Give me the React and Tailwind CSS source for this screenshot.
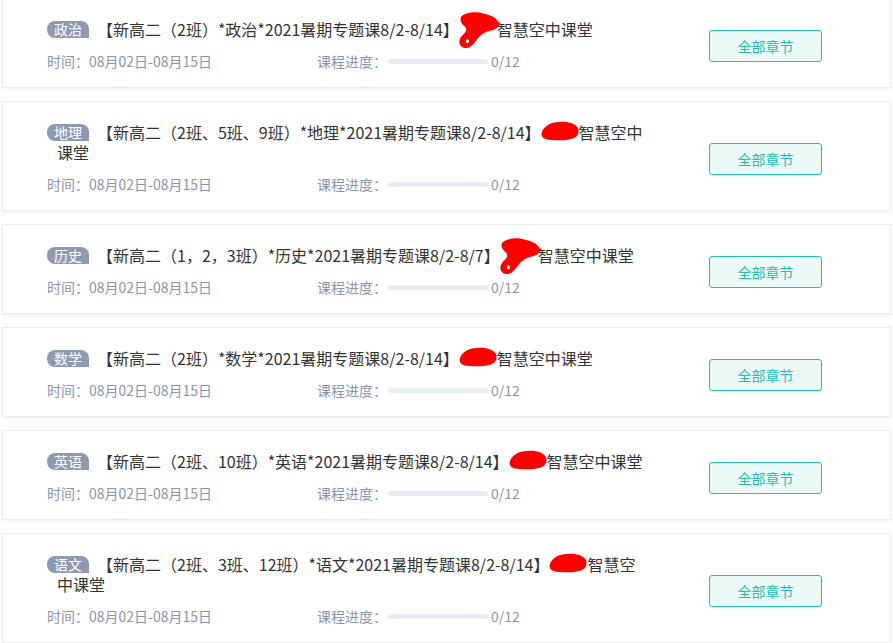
import React from "react";

const blobs = {
  a: (
    <svg width="46" height="40" viewBox="0 0 46 40" className="absolute left-[-4px] top-[-8px]">
      <path d="M6 6 C10 1 22 0 30 3 C36 4 42 7 44 12 C45 16 40 19 34 20 C30 21 27 23 24 26 C20 31 16 38 10 37 C4 36 3 30 6 26 C9 22 12 21 11 17 C9 14 4 12 6 6 Z M12 28 C10 30 11 33 13 32 C15 31 14 28 12 28 Z" fill="#ff0000" fillRule="evenodd" />
    </svg>
  ),
  b: (
    <svg width="42" height="22" viewBox="0 0 42 22" className="absolute left-[-2px] top-[-2px]">
      <path d="M3 12 C5 6 12 2 20 2 C28 1 36 3 39 8 C41 13 38 18 32 19 C26 21 18 20 12 20 C6 20 1 17 3 12 Z" fill="#ff0000" />
    </svg>
  ),
};

const courses = [
  {
    tag: "政治",
    lines: ["【新高二（2班）*政治*2021暑期专题课8/2-8/14】", "智慧空中课堂"],
    blob: "a",
  },
  {
    tag: "地理",
    lines: ["【新高二（2班、5班、9班）*地理*2021暑期专题课8/2-8/14】", "智慧空中"],
    second: "课堂",
    blob: "b",
  },
  {
    tag: "历史",
    lines: ["【新高二（1，2，3班）*历史*2021暑期专题课8/2-8/7】", "智慧空中课堂"],
    blob: "a",
  },
  {
    tag: "数学",
    lines: ["【新高二（2班）*数学*2021暑期专题课8/2-8/14】", "智慧空中课堂"],
    blob: "b",
  },
  {
    tag: "英语",
    lines: ["【新高二（2班、10班）*英语*2021暑期专题课8/2-8/14】", "智慧空中课堂"],
    blob: "b",
  },
  {
    tag: "语文",
    lines: ["【新高二（2班、3班、12班）*语文*2021暑期专题课8/2-8/14】", "智慧空"],
    second: "中课堂",
    blob: "b",
  },
];

function Card({ c, first }) {
  return (
    <div
      className={
        "mx-[2px] flex items-center border border-[#ececec] bg-white pl-[44px] pr-[68px] shadow-[0_2px_3px_rgba(0,0,0,0.05)] " +
        (first ? "-mt-[2px]" : "mt-[13px]")
      }
    >
      <div className="flex-1 pt-[20px] pb-[16px]">
        <div className="flex items-center h-[20px] whitespace-nowrap">
          <span className="inline-flex h-[17px] w-[42px] shrink-0 items-center justify-center rounded-tl-[8px] rounded-tr-[8px] rounded-bl-[8px] bg-[#8f9ab2] text-[14px] leading-none text-white">
            {c.tag}
          </span>
          <span className="ml-[8px] text-[16px] leading-[20px] text-[#333333]">
            {c.lines[0]}
            <span className="relative inline-block w-[38px] h-[20px] align-top">{blobs[c.blob]}</span>
            {c.lines[1]}
          </span>
        </div>
        {c.second && (
          <div className="pl-[10px] h-[20px] text-[16px] leading-[20px] text-[#333333] whitespace-nowrap">
            {c.second}
          </div>
        )}
        <div className="mt-[12px] flex items-center h-[20px] text-[14px] leading-[20px] text-[#8c95a8] whitespace-nowrap">
          <span className="w-[270px]">时间：08月02日-08月15日</span>
          <span>课程进度：</span>
          <span className="ml-[1px] h-[5px] w-[100px] rounded-full bg-[#e9ecf3]" />
          <span className="ml-[3px]">0/12</span>
        </div>
      </div>
      <button className="mt-[6px] h-[32px] w-[113px] shrink-0 rounded-[3px] border border-[#20c4b1] bg-[#ebf9f7] text-[14px] text-[#1bbfae]">
        全部章节
      </button>
    </div>
  );
}

export default function App() {
  return (
    <div
      className="min-h-screen bg-white overflow-hidden"
      style={{ fontFamily: '"Noto Sans CJK SC", "Noto Sans", sans-serif' }}
    >
      {courses.map((c, i) => (
        <Card key={i} c={c} first={i === 0} />
      ))}
    </div>
  );
}
